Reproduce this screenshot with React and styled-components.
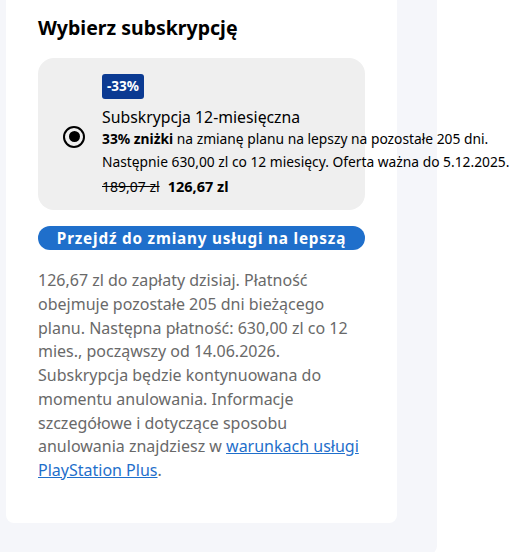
import React from 'react';
import styled, { createGlobalStyle } from 'styled-components';

const GlobalStyle = createGlobalStyle`
  html, body {
    margin: 0;
    padding: 0;
    background: #ffffff;
    font-family: 'Noto Sans', 'Open Sans', sans-serif;
    color: #000;
  }
`;

const Panel = styled.div`
  width: 437px;
  min-height: 552px;
  box-sizing: border-box;
  background: #f5f6fa;
  border-bottom-right-radius: 8px;
  padding: 0 40px 31px 6px;
`;

const Card = styled.section`
  background: #ffffff;
  border-radius: 0 0 8px 8px;
  padding: 14px 32px 40px 32px;
`;

const Title = styled.h2`
  margin: 0 0 16px;
  font-size: 19.5px;
  line-height: 28px;
  font-weight: 700;
`;

const Option = styled.label`
  display: grid;
  grid-template-columns: 64px 1fr;
  align-items: center;
  background: #efefef;
  border-radius: 16px;
  padding: 16px 0 12px;
  height: 152px;
  box-sizing: border-box;
`;

const Radio = styled.span`
  justify-self: start;
  margin-left: 25px;
  width: 22px;
  height: 22px;
  box-sizing: border-box;
  border: 2.5px solid #000;
  border-radius: 50%;
  display: grid;
  place-items: center;
  &::after {
    content: '';
    width: 11px;
    height: 11px;
    border-radius: 50%;
    background: #000;
  }
`;

const Info = styled.div`
  display: flex;
  flex-direction: column;
  align-items: flex-start;
`;

const Badge = styled.span`
  background: #0b3a92;
  color: #fff;
  font-weight: 700;
  font-size: 13.5px;
  line-height: 25px;
  padding: 0 5px;
  border-radius: 3px;
  margin-bottom: 7px;
`;

const PlanName = styled.div`
  font-size: 15.8px;
  line-height: 22px;
`;

const Detail = styled.div`
  font-size: 13.8px;
  line-height: 22.5px;
  white-space: nowrap;
  b {
    font-weight: 700;
  }
`;

const Prices = styled.div`
  display: flex;
  align-items: baseline;
  gap: 8px;
  font-size: 14px;
  line-height: 24px;
  margin-top: 1px;
`;

const OldPrice = styled.s`
  color: #000;
`;

const NewPrice = styled.span`
  font-weight: 700;
  font-size: 14.5px;
`;

const UpgradeButton = styled.button`
  display: block;
  width: 100%;
  height: 24px;
  margin-top: 16px;
  border: none;
  border-radius: 12px;
  background: #1f6fcb;
  color: #fff;
  font-family: inherit;
  font-size: 15.3px;
  font-weight: 700;
  letter-spacing: 0.8px;
  padding: 0;
  cursor: pointer;
`;

const Terms = styled.p`
  margin: 19px 0 0;
  color: #696969;
  font-size: 16px;
  line-height: 23.75px;
  a {
    color: #1f6fcb;
    text-decoration: underline;
  }
`;

export default function App() {
  return (
    <>
      <GlobalStyle />
      <Panel>
        <Card>
          <Title>Wybierz subskrypcję</Title>
          <Option>
            <Radio />
            <Info>
              <Badge>-33%</Badge>
              <PlanName>Subskrypcja 12-miesięczna</PlanName>
              <Detail>
                <b>33% zniżki</b> na zmianę planu na lepszy na pozostałe 205 dni.
              </Detail>
              <Detail>Następnie 630,00 zl co 12 miesięcy. Oferta ważna do 5.12.2025.</Detail>
              <Prices>
                <OldPrice>189,07 zl</OldPrice>
                <NewPrice>126,67 zl</NewPrice>
              </Prices>
            </Info>
          </Option>
          <UpgradeButton>Przejdź do zmiany usługi na lepszą</UpgradeButton>
          <Terms>
            126,67 zl do zapłaty dzisiaj. Płatność obejmuje pozostałe 205 dni bieżącego planu.
            Następna płatność: 630,00 zl co 12 mies., począwszy od 14.06.2026. Subskrypcja będzie
            kontynuowana do momentu anulowania. Informacje szczegółowe i dotyczące sposobu
            anulowania znajdziesz w <a href="#">warunkach usługi PlayStation Plus</a>.
          </Terms>
        </Card>
      </Panel>
    </>
  );
}
